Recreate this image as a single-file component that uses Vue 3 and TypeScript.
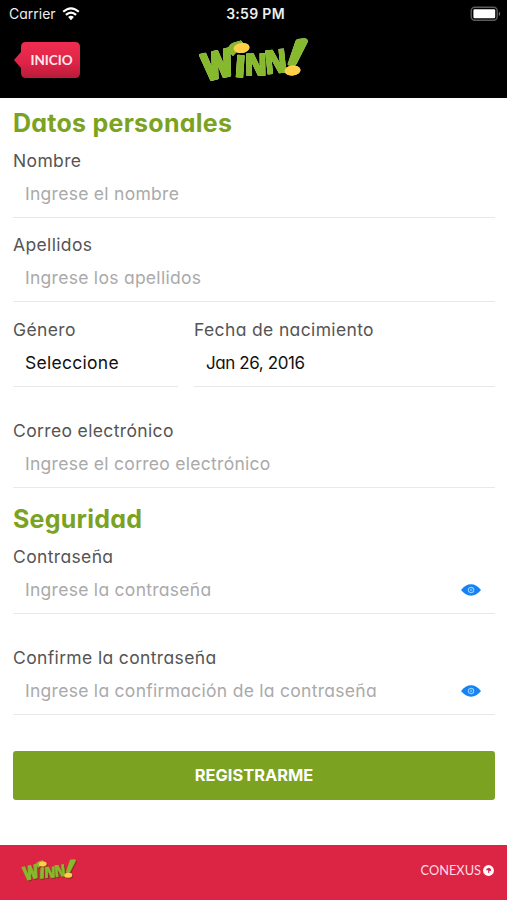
<script setup lang="ts">
import { ref } from 'vue'

const nombre = ref('')
const apellidos = ref('')
const correo = ref('')
const clave = ref('')
const confirmacion = ref('')
const verClave = ref(false)
const verConfirmacion = ref(false)
</script>

<template>
  <div class="screen">
    <header class="top">
      <div class="status">
        <div class="carrier">
          <span class="carrier-name">Carrier</span>
          <svg class="wifi" viewBox="0 0 18 14" width="18" height="14">
            <path d="M1.2 4.8Q9-2.2 16.8 4.8" />
            <path d="M3.9 7.9Q9 3.4 14.1 7.9" />
            <path class="dot" d="M6.1 10Q9 7.7 11.9 10L9 13.3Z" />
          </svg>
        </div>
        <span class="clock">3:59 PM</span>
        <svg class="battery" viewBox="0 0 32 16" width="32" height="16">
          <rect class="shell" x="1.2" y="1.2" width="26" height="13" rx="3.6" />
          <rect class="charge" x="3.4" y="3.2" width="21.8" height="9" rx="1.2" />
          <path class="tip" d="M28.9 5.4q2.6 2.3 0 4.6z" />
        </svg>
      </div>
      <div class="bar">
        <button class="home" type="button">
          <svg viewBox="0 0 68 40" width="68" height="40">
            <defs>
              <linearGradient id="homeFill" x1="0" y1="0" x2="0" y2="1">
                <stop offset="0" stop-color="#f02d50" />
                <stop offset=".6" stop-color="#dd2347" />
                <stop offset="1" stop-color="#b91c39" />
              </linearGradient>
            </defs>
            <path fill="url(#homeFill)" d="M12 2H62Q67 2 67 7V33Q67 38 62 38H13Q8 38 8 33V28L1 20L8 12V7Q8 2 13 2Z" />
          </svg>
          <span class="home-text">INICIO</span>
        </button>
        <svg class="logo" viewBox="0 0 112 48" width="112" height="48">
          <g class="letters">
            <text class="wide" transform="translate(7.500 45) rotate(-13)" font-size="37" textLength="31" lengthAdjust="spacingAndGlyphs">W</text>
            <text transform="translate(36 40.500) rotate(4)" font-size="30" textLength="11" lengthAdjust="spacingAndGlyphs">I</text>
            <text transform="translate(47 39.500) rotate(-1)" font-size="30" textLength="22" lengthAdjust="spacingAndGlyphs">N</text>
            <text transform="translate(68 38) rotate(-6)" font-size="32" textLength="22" lengthAdjust="spacingAndGlyphs">N</text>
          </g>
          <path class="mark" d="M97.500 5Q98 3.300 100 3L106 2.300Q110.500 2.300 109.500 6.500L98.500 28Q97.500 30 95.500 30L91 29.500Q89 29 90 27Z" />
          <path class="mark" d="M29 14Q32 7 36 6.500L43 4.500L46 8L35 20Z" />
          <ellipse class="spot" cx="43.500" cy="12" rx="8" ry="5" transform="rotate(-8 43.500 12)" />
          <ellipse class="spot" cx="94.500" cy="34.500" rx="8" ry="5" transform="rotate(-5 94.500 34.500)" />
        </svg>
      </div>
    </header>

    <main class="form">
      <h2 class="title">Datos personales</h2>
      <div class="field">
        <label for="nombre">Nombre</label>
        <input id="nombre" v-model="nombre" type="text" placeholder="Ingrese el nombre" />
      </div>
      <div class="field">
        <label for="apellidos">Apellidos</label>
        <input id="apellidos" v-model="apellidos" type="text" placeholder="Ingrese los apellidos" />
      </div>
      <div class="pair">
        <div class="field">
          <label>Género</label>
          <div class="value">Seleccione</div>
        </div>
        <div class="field">
          <label>Fecha de nacimiento</label>
          <div class="value date">Jan 26, 2016</div>
        </div>
      </div>
      <div class="field spaced">
        <label for="correo">Correo electrónico</label>
        <input id="correo" v-model="correo" type="email" placeholder="Ingrese el correo electrónico" />
      </div>
      <h2 class="title second">Seguridad</h2>
      <div class="field">
        <label for="clave">Contraseña</label>
        <div class="secret">
          <input id="clave" v-model="clave" :type="verClave ? 'text' : 'password'" placeholder="Ingrese la contraseña" />
          <svg class="eye" viewBox="0 0 20 12" width="20" height="12" @click="verClave = !verClave">
            <path d="M0 6Q4.500 .3 10 .3T20 6Q15.500 11.700 10 11.700T0 6Z" />
            <circle class="ring" cx="10" cy="6" r="2.700" />
            <circle class="pupil" cx="10" cy="6" r=".9" />
          </svg>
        </div>
      </div>
      <div class="field spaced">
        <label for="confirmacion">Confirme la contraseña</label>
        <div class="secret">
          <input id="confirmacion" v-model="confirmacion" :type="verConfirmacion ? 'text' : 'password'" placeholder="Ingrese la confirmación de la contraseña" />
          <svg class="eye" viewBox="0 0 20 12" width="20" height="12" @click="verConfirmacion = !verConfirmacion">
            <path d="M0 6Q4.500 .3 10 .3T20 6Q15.500 11.700 10 11.700T0 6Z" />
            <circle class="ring" cx="10" cy="6" r="2.700" />
            <circle class="pupil" cx="10" cy="6" r=".9" />
          </svg>
        </div>
      </div>
      <button class="submit" type="button">REGISTRARME</button>
    </main>

    <footer class="foot">
      <svg class="logo-small" viewBox="0 0 112 48" width="56" height="24">
        <g class="letters">
          <text class="wide" transform="translate(7.500 45) rotate(-13)" font-size="37" textLength="31" lengthAdjust="spacingAndGlyphs">W</text>
          <text transform="translate(36 40.500) rotate(4)" font-size="30" textLength="11" lengthAdjust="spacingAndGlyphs">I</text>
          <text transform="translate(47 39.500) rotate(-1)" font-size="30" textLength="22" lengthAdjust="spacingAndGlyphs">N</text>
          <text transform="translate(68 38) rotate(-6)" font-size="32" textLength="22" lengthAdjust="spacingAndGlyphs">N</text>
        </g>
        <path class="mark" d="M97.500 5Q98 3.300 100 3L106 2.300Q110.500 2.300 109.500 6.500L98.500 28Q97.500 30 95.500 30L91 29.500Q89 29 90 27Z" />
        <path class="mark" d="M29 14Q32 7 36 6.500L43 4.500L46 8L35 20Z" />
        <ellipse class="spot" cx="43.500" cy="12" rx="8" ry="5" transform="rotate(-8 43.500 12)" />
        <ellipse class="spot" cx="94.500" cy="34.500" rx="8" ry="5" transform="rotate(-5 94.500 34.500)" />
      </svg>
      <div class="brand">
        <span>CONEXUS</span>
        <svg viewBox="0 0 12 12" width="11" height="11">
          <circle cx="6" cy="6" r="5.900" fill="#fff" />
          <path d="M3.300 5.800A2.800 2.800 0 0 1 8.800 5.200L8.600 6.600H6.800V8.600L5.600 8.400V5.800Z" fill="#dc2445" />
        </svg>
      </div>
    </footer>
  </div>
</template>

<style>
body {
  background: #fff;
}
</style>

<style scoped>
.screen {
  box-sizing: border-box;
  display: flex;
  flex-direction: column;
  width: 507px;
  height: 900px;
  background: #fff;
  font-family: Inter, 'Open Sans', sans-serif;
  font-feature-settings: 'cv11' 1;
}
.top {
  height: 98px;
  background: #000;
  flex: none;
}
.status {
  display: grid;
  grid-template-columns: 1fr auto 1fr;
  align-items: center;
  height: 27px;
  padding: 0 5px 0 9px;
  color: #eee;
  font-size: 14px;
}
.carrier {
  display: flex;
  align-items: center;
  gap: 6px;
}
.wifi path {
  fill: none;
  stroke: #fff;
  stroke-width: 2.2;
}
.wifi .dot {
  fill: #fff;
  stroke: none;
}
.clock {
  font-weight: 600;
  font-size: 14px;
  letter-spacing: 0.3px;
}
.battery {
  justify-self: end;
}
.shell {
  fill: none;
  stroke: #5c5c5c;
  stroke-width: 1.4;
}
.charge {
  fill: #fff;
}
.tip {
  fill: #777;
}
.bar {
  display: grid;
  grid-template-columns: 1fr auto 1fr;
  align-items: start;
  height: 71px;
  padding: 0 13px;
}
.home {
  display: grid;
  width: 68px;
  height: 40px;
  margin-top: 13px;
  padding: 0;
  border: 0;
  background: none;
}
.home svg,
.home-text {
  grid-area: 1 / 1;
}
.home-text {
  align-self: center;
  padding-left: 9px;
  color: #ffe8ec;
  font: 700 13.5px Lato, sans-serif;
}
.logo {
  margin-top: 9px;
  overflow: visible;
  filter: drop-shadow(0 0 0.5px #e6efcf);
}
.letters text {
  font-family: 'Open Sans', sans-serif;
  font-weight: 800;
  fill: #86b92d;
  stroke: #86b92d;
  stroke-width: 1.2px;
  stroke-linejoin: round;
}
.letters .wide {
  stroke-width: 2.4px;
}
.mark {
  fill: #86b92d;
}
.spot {
  fill: #ffcf45;
}
.form {
  display: flex;
  flex-direction: column;
  flex: 1;
  padding: 6px 12px 0 13px;
}
.title {
  margin: 0;
  height: 45px;
  line-height: 38px;
  color: #7ba321;
  font-size: 25px;
  font-weight: 700;
  letter-spacing: 0.25px;
}
.field {
  margin-bottom: 15.3px;
}
label {
  display: block;
  height: 24px;
  line-height: 24px;
  color: #555;
  font-size: 17.5px;
  letter-spacing: 0.36px;
}
input,
.value {
  box-sizing: border-box;
  display: block;
  width: 100%;
  height: 45px;
  margin: 0;
  padding: 0 12px 2px;
  border: 0;
  border-bottom: 1px solid #e8e8e8;
  border-radius: 0;
  outline: 0;
  background: transparent;
  color: #111;
  font: inherit;
  font-size: 17.5px;
  line-height: 42px;
  letter-spacing: 0.28px;
}
input {
  padding-bottom: 3px;
}
.date {
  font-size: 17px;
  letter-spacing: -0.4px;
}
input::placeholder {
  color: #aaa;
  opacity: 1;
}
.pair {
  display: grid;
  grid-template-columns: 165px 1fr;
  gap: 16px;
}
.spaced {
  margin-top: 17px;
}
.second {
  margin-top: -3px;
}
.secret {
  display: grid;
}
.secret input,
.eye {
  grid-area: 1 / 1;
}
.eye {
  align-self: center;
  justify-self: end;
  margin: 0 14px 4px 0;
  fill: #1683f5;
}
.ring {
  fill: none;
  stroke: #8ccaff;
  stroke-width: 1.2;
}
.pupil {
  fill: #8ccaff;
}
.submit {
  height: 49px;
  margin: 20px 0 0;
  padding: 0;
  border: 0;
  border-radius: 3px;
  background: #7ba321;
  color: #fff;
  font: 700 16.4px Inter, sans-serif;
}
.foot {
  display: flex;
  align-items: flex-start;
  justify-content: space-between;
  flex: none;
  box-sizing: border-box;
  height: 55px;
  padding: 13px 13px 0 21px;
  background: #dc2445;
}
.logo-small {
  overflow: visible;
  filter: drop-shadow(1px 1px 0 #8c3021);
}
.brand {
  display: flex;
  align-items: center;
  gap: 2px;
  height: 24px;
  color: #ffdce3;
  font: 400 12.8px Lato, sans-serif;
}
</style>
